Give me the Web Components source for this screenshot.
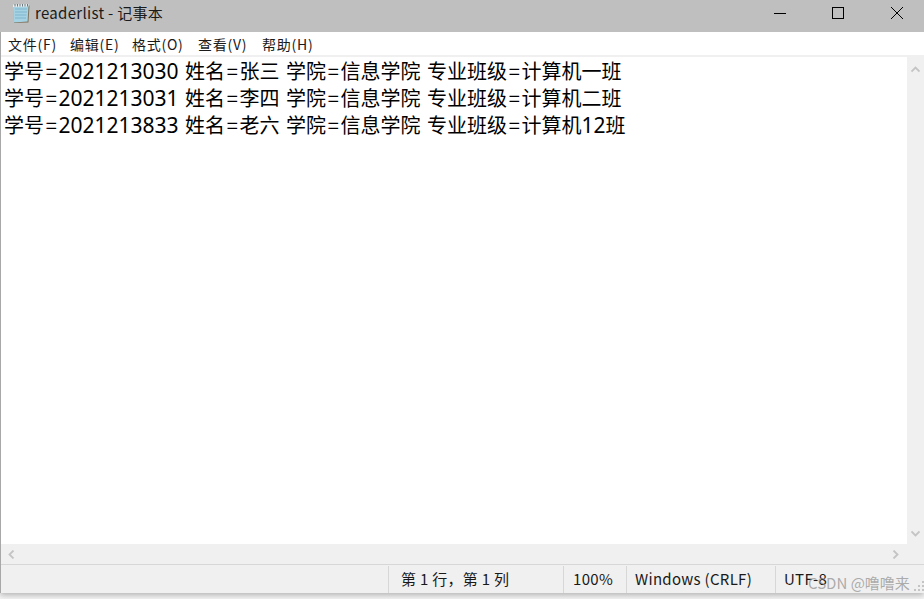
<!DOCTYPE html>
<html lang="zh">
<head>
<meta charset="utf-8">
<title>readerlist - 记事本</title>
<style>
  html, body { margin: 0; height: 100%; background: #f4f4f4; }
  body { font-family: "Noto Sans CJK SC", "Noto Sans", sans-serif; overflow: hidden; }
</style>
</head>
<body>
<note-window>
  <title-bar slot="title">readerlist - 记事本</title-bar>
  <menu-bar slot="menu">
    <menu-item style="width:62px">文件(F)</menu-item>
    <menu-item style="width:62px">编辑(E)</menu-item>
    <menu-item style="width:66px">格式(O)</menu-item>
    <menu-item style="width:64px">查看(V)</menu-item>
    <menu-item>帮助(H)</menu-item>
  </menu-bar>
  <text-pane slot="body">
    <text-line>学号<i>=</i><b>2021213030</b> 姓名<i>=</i>张三 学院<i>=</i>信息学院 专业班级<i>=</i>计算机一班</text-line>
    <text-line>学号<i>=</i><b>2021213031</b> 姓名<i>=</i>李四 学院<i>=</i>信息学院 专业班级<i>=</i>计算机二班</text-line>
    <text-line>学号<i>=</i><b>2021213833</b> 姓名<i>=</i>老六 学院<i>=</i>信息学院 专业班级<i>=</i>计算机<b>12</b>班</text-line>
  </text-pane>
  <status-bar slot="status">
    <status-cell style="width:162px;padding-left:12px">第 1 行，第 1 列</status-cell>
    <status-cell style="width:53px">100%</status-cell>
    <status-cell style="width:140px;padding-left:8px">Windows (CRLF)</status-cell>
    <status-cell style="width:130px;padding-left:8px">UTF-8</status-cell>
  </status-bar>
</note-window>
<water-mark>CSDN @噜噜来</water-mark>

<script>
const FONT = '"Noto Sans CJK SC", "Noto Sans", sans-serif';

function shadowFor(el, html) {
  const root = el.attachShadow({ mode: 'open' });
  root.innerHTML = html;
}

class NoteWindow extends HTMLElement {
  constructor() {
    super();
    shadowFor(this, `
      <style>
        :host {
          display: flex;
          flex-direction: column;
          height: 593px;
          border-left: 1px solid #a8a8a8;
          box-shadow: 0 2px 6px rgba(0,0,0,.28);
          background: #fff;
          box-sizing: border-box;
        }
        .title { margin-left: -1px; }
      </style>
      <div class="title"><slot name="title"></slot></div>
      <slot name="menu"></slot>
      <slot name="body"></slot>
      <slot name="status"></slot>`);
  }
}

class TitleBar extends HTMLElement {
  constructor() {
    super();
    shadowFor(this, `
      <style>
        :host {
          display: flex;
          align-items: center;
          height: 32px;
          background: #bfbfbf;
          color: #1a1a1a;
          font: 15px ${FONT};
          letter-spacing: .3px;
        }
        .icon { margin-left: 12px; width: 19px; height: 21px; flex: none; margin-top: -6px; }
        .label { margin-left: 4px; flex: 1; margin-top: -7px; }
        .btns { display: flex; height: 32px; margin-right: -2px; }
        .btn { width: 58.5px; display: flex; align-items: center; justify-content: center; }
        .btn svg { width: 12px; height: 12px; margin-top: -6px; overflow: visible; }
      </style>
      <svg class="icon" viewBox="0 0 19 21">
        <path d="M1 4 L17.5 2.5 L16.5 19.5 L2 20 Z" fill="#6b5d3f" opacity=".75"/>
        <path d="M1 3.5 L16.5 2.5 L15.5 18.5 L1.5 19.5 Z" fill="#a6d3e4"/>
        <path d="M3 6H15M3 9H15M3 12H14.5M3 15H14" stroke="#7fb4cb" stroke-width="1"/>
        <path d="M1 1.5 L16.5 1 L16.5 3.5 L1 4 Z" fill="#e8eef0"/>
        <path d="M3 1V3.5M5.5 1V3.5M8 1V3.5M10.5 1V3.5M13 1V3.5M15.5 1V3.5" stroke="#5d6b70" stroke-width=".9"/>
      </svg>
      <span class="label"><slot></slot></span>
      <div class="btns">
        <div class="btn"><svg viewBox="0 0 12 12"><path d="M0 6.5H12" stroke="#000" fill="none"/></svg></div>
        <div class="btn"><svg viewBox="0 0 12 12"><rect x=".5" y=".5" width="11" height="11" stroke="#000" fill="none"/></svg></div>
        <div class="btn"><svg viewBox="0 0 12 12"><path d="M0 0L12 12M12 0L0 12" stroke="#000" fill="none"/></svg></div>
      </div>`);
  }
}

class MenuBar extends HTMLElement {
  constructor() {
    super();
    shadowFor(this, `
      <style>
        :host {
          display: flex;
          height: 23px;
          padding-left: 7px;
          align-items: center;
          background: #fff;
          border-bottom: 2px solid #f0f0f0;
          font: 14px ${FONT};
          letter-spacing: .75px;
          color: #1a1a1a;
        }
      </style>
      <slot></slot>`);
  }
}

class MenuItem extends HTMLElement {
  constructor() {
    super();
    shadowFor(this, `<style>:host { display: block; white-space: nowrap; line-height: 23px; padding-top: 2px; }</style><slot></slot>`);
  }
}

class TextPane extends HTMLElement {
  constructor() {
    super();
    shadowFor(this, `
      <style>
        :host { display: flex; flex-direction: column; height: 507px; background: #f0f0f0; }
        .row { display: flex; flex: 1; min-height: 0; }
        .text { flex: 1; background: #fff; padding: 0 0 0 3px; }
        .v { width: 17px; display: flex; flex-direction: column; justify-content: space-between; align-items: center; }
        .h { height: 20px; display: flex; justify-content: space-between; align-items: center; padding: 0 24px 0 6px; }
        svg { width: 9px; height: 9px; display: block; }
        .v svg:first-child { margin-top: 8px; }
        .v svg:last-child { margin-bottom: 6px; }
      </style>
      <div class="row">
        <div class="text"><slot></slot></div>
        <div class="v">
          <svg viewBox="0 0 9 9"><path d="M.5 6.5L4.5 2.5L8.5 6.5" stroke="#c4c4c4" stroke-width="1.8" fill="none"/></svg>
          <svg viewBox="0 0 9 9"><path d="M.5 2.5L4.5 6.5L8.5 2.5" stroke="#c4c4c4" stroke-width="1.8" fill="none"/></svg>
        </div>
      </div>
      <div class="h">
        <svg viewBox="0 0 9 9"><path d="M6.5 .5L2.5 4.5L6.5 8.5" stroke="#c4c4c4" stroke-width="1.8" fill="none"/></svg>
        <svg viewBox="0 0 9 9"><path d="M2.5 .5L6.5 4.5L2.5 8.5" stroke="#c4c4c4" stroke-width="1.8" fill="none"/></svg>
      </div>`);
  }
}

class TextLine extends HTMLElement {
  constructor() {
    super();
    shadowFor(this, `
      <style>
        :host {
          display: block;
          height: 27px;
          font: 20px/27px ${FONT};
          color: #000;
          white-space: nowrap;
          word-spacing: 2px;
        }
        ::slotted(b) { font: 21px/27px "Noto Sans", sans-serif; }
        ::slotted(i) { font-style: normal; letter-spacing: 1.7px; padding-left: 1.7px; }
      </style>
      <slot></slot>`);
  }
}

class StatusBar extends HTMLElement {
  constructor() {
    super();
    shadowFor(this, `
      <style>
        :host {
          position: relative;
          display: flex;
          height: 29px;
          padding-left: 387px;
          background: #f0f0f0;
          border-top: 1px solid #d7d7d7;
          box-sizing: border-box;
          font: 15px ${FONT};
          color: #1a1a1a;
          overflow: hidden;
        }
        .grip { position: absolute; right: 0; bottom: 2px; width: 10px; height: 10px; }
      </style>
      <slot></slot>
      <svg class="grip" viewBox="0 0 10 10" fill="#c4c4c4">
        <rect x="8" y="0" width="2" height="2"/>
        <rect x="4" y="4" width="2" height="2"/><rect x="8" y="4" width="2" height="2"/>
        <rect x="0" y="8" width="2" height="2"/><rect x="4" y="8" width="2" height="2"/><rect x="8" y="8" width="2" height="2"/>
      </svg>`);
  }
}

class StatusCell extends HTMLElement {
  constructor() {
    super();
    shadowFor(this, `
      <style>
        :host {
          display: flex;
          align-items: center;
          flex: none;
          box-sizing: content-box;
          border-left: 1px solid #d7d7d7;
          padding-left: 9px;
          padding-bottom: 2px;
          margin-top: 1px;
          white-space: nowrap;
          letter-spacing: .3px;
        }
      </style>
      <slot></slot>`);
  }
}

class WaterMark extends HTMLElement {
  constructor() {
    super();
    shadowFor(this, `
      <style>
        :host {
          position: absolute;
          left: 808px;
          top: 572px;
          font: 15px/22px ${FONT};
          color: rgba(140,140,140,.7);
          white-space: nowrap;
        }
      </style>
      <slot></slot>`);
  }
}

customElements.define('note-window', NoteWindow);
customElements.define('title-bar', TitleBar);
customElements.define('menu-bar', MenuBar);
customElements.define('menu-item', MenuItem);
customElements.define('text-pane', TextPane);
customElements.define('text-line', TextLine);
customElements.define('status-bar', StatusBar);
customElements.define('status-cell', StatusCell);
customElements.define('water-mark', WaterMark);
</script>
</body>
</html>
